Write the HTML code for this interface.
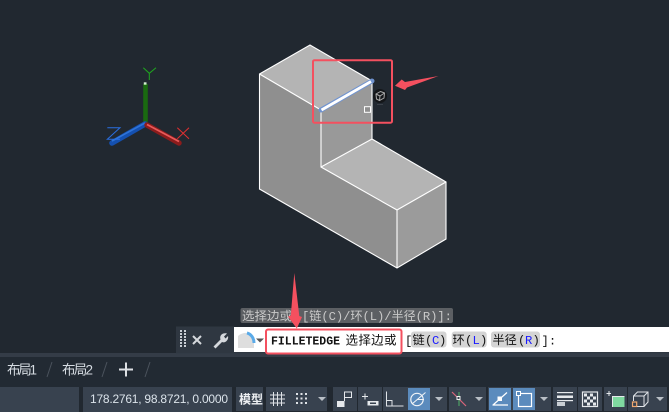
<!DOCTYPE html>
<html><head><meta charset="utf-8">
<style>
html,body{margin:0;padding:0;background:#212830;width:669px;height:412px;overflow:hidden}
svg{display:block}
text{font-family:"Liberation Mono","Noto Sans CJK SC",monospace}
.s{font-family:"Liberation Sans","Noto Sans CJK SC",sans-serif}
</style></head><body>
<svg width="669" height="412" viewBox="0 0 669 412" xmlns="http://www.w3.org/2000/svg">
<rect width="669" height="412" fill="#212830"/>

<!-- solid -->
<g stroke="none">
<polygon points="259.5,74 310,45 372,81 321,110" fill="#b4b4b4"/>
<polygon points="259.5,74 321,110 321,167 397,210 397,268 259.5,189" fill="#8f8f8f"/>
<polygon points="321,110 372,81 372,139 321,167" fill="#999999"/>
<polygon points="321,167 372,139 446,182 397,210" fill="#b4b4b4"/>
<polygon points="397,210 446,182 446,239 397,268" fill="#9b9b9b"/>
</g>
<g fill="none" stroke="#fff" stroke-width="1.1">
<path d="M259.5,74 L310,45 L372,81 L372,139 L446,182 L446,239 L397,268 L259.5,189 Z"/>
<path d="M259.5,74 L321,110 L321,167 L397,210 L397,268"/>
<path d="M321,167 L372,139"/>
<path d="M397,210 L446,182"/>
</g>
<path d="M321,110 L372,81" stroke="#6f93d0" stroke-width="5" stroke-linecap="round"/>
<path d="M321.5,110 L371,81.5" stroke="#fff" stroke-width="2.8"/>
<rect x="364.5" y="106.7" width="6" height="5.6" fill="#8f8f8f" stroke="#fff" stroke-width="1"/>

<!-- cursor cube -->
<circle cx="380" cy="96" r="7" fill="#141619"/>
<g fill="none" stroke="#a8a8a8" stroke-width="1">
<path d="M376,94 L380.5,91.5 L384.5,93 L384,98 L379.5,100.5 L376.5,99 Z"/>
<path d="M376,94 L380,96 L384.5,93 M380,96 L379.5,100.5"/>
</g>
<path d="M377,104.5 H383" stroke="#3a4048" stroke-width="1"/>

<!-- red box and arrows -->
<rect x="313" y="60.2" width="79" height="62.5" rx="1.5" fill="none" stroke="#f4505f" stroke-width="2"/>
<polygon points="395,85.7 401.7,79.5 405,82 438.5,76 407,87.5 405,90" fill="#f4505f"/>

<!-- UCS -->
<path d="M145.5,84 L145.5,124" stroke="#1a6a10" stroke-width="4.6"/>
<path d="M143.8,83.5 L146.5,83.5" stroke="#d5f0d0" stroke-width="2.4"/>
<path d="M145,124 L112,143" stroke="#1450b0" stroke-width="5.6" stroke-linecap="round"/>
<path d="M145,123 L112,141" stroke="#2f74d8" stroke-width="1.6"/>
<path d="M147,125 L179,143" stroke="#8c1c1c" stroke-width="5.4" stroke-linecap="round"/>
<path d="M147,124.5 L179,141.5" stroke="#e85a5a" stroke-width="1.7"/>
<g fill="none" stroke-width="1">
<path d="M143.3,67.7 L149.3,73.3 L156,67.7 M149.3,73.3 L149.3,80" stroke="#1fa51f"/>
<path d="M177.3,127.7 L189,138.7 M189,127.7 L177.3,138.7" stroke="#e03030"/>
<path d="M107.3,127.7 L120,127.7 L107.3,139.3 L120,139.3" stroke="#2a6fe0"/>
</g>

<!-- tooltip -->
<rect x="240.5" y="308" width="212.5" height="15" rx="2" fill="#5c5f63"/>
<g font-size="12.2" fill="#c9c9c9">
<text x="242" y="320" textLength="50" lengthAdjust="spacingAndGlyphs">选择边或</text>
<text x="302" y="320" textLength="150" lengthAdjust="spacing">[链(C)/环(L)/半径(R)]:</text>
</g>

<!-- command bar -->
<rect x="176" y="326.5" width="58" height="26.5" fill="#2f3741"/>
<rect x="234" y="327" width="435" height="25" fill="#ffffff"/>
<rect x="0" y="353" width="669" height="4" fill="#343c47"/>
<rect x="176" y="352" width="493" height="1.2" fill="#2f3741"/>
<g fill="#c9ced4">
<path d="M180,330 h2v2h-2z M184,330 h2v2h-2z M180,333 h2v2h-2z M184,333 h2v2h-2z M180,336 h2v2h-2z M184,336 h2v2h-2z M180,339 h2v2h-2z M184,339 h2v2h-2z M180,342 h2v2h-2z M184,342 h2v2h-2z M180,345 h2v2h-2z M184,345 h2v2h-2z"/>
</g>
<path d="M193,336 L201,344 M201,336 L193,344" stroke="#d5d8dc" stroke-width="2"/>
<path d="M213.5,346.5 L220.5,339.5 C219,335 223,332.5 227,333.5 L224,336.5 L225.5,338.5 L228,336 C229,340 225,343.5 222,342 L215.5,348.5 Z" fill="#d5d8dc"/>
<!-- fillet icon -->
<path d="M238,348 L238,336 C241,333 246,332.5 248,333 L254,340 L254,348 Z" fill="#dedede"/>
<path d="M247,333 C251,334 254,338 254,343" fill="none" stroke="#5aaae8" stroke-width="3"/>
<polygon points="256,338.5 264,338.5 260,342.5" fill="#555"/>

<!-- input -->
<rect x="266" y="329.5" width="135.5" height="24" rx="2" fill="#fff" stroke="#f4505f" stroke-width="2"/>
<text x="271" y="344.5" font-size="11.5" font-weight="bold" fill="#111" textLength="69">FILLETEDGE</text>
<text x="345.5" y="344.5" font-size="12.5" fill="#111" textLength="51">选择边或</text>

<!-- vertical arrow -->
<polygon points="294.3,273 299.3,316 302,317 296.8,328.5 288,316.5 290.8,315.5" fill="#f4505f"/>

<!-- options -->
<rect x="411" y="331.5" width="35.5" height="16" rx="3" fill="#d4d4d4"/>
<rect x="451.7" y="331.5" width="35" height="16" rx="3" fill="#d4d4d4"/>
<rect x="491" y="331.5" width="49" height="16" rx="3" fill="#d4d4d4"/>
<g font-size="12.2" fill="#111">
<text x="405" y="344.5">[</text>
<text x="412.5" y="344">链</text><text x="425" y="344">(</text><text x="432" y="344" fill="#1a1aff">C</text><text x="439" y="344">)</text>
<text x="452.5" y="344">环</text><text x="465" y="344">(</text><text x="472.5" y="344" fill="#1a1aff">L</text><text x="480" y="344">)</text>
<text x="492.5" y="344">半径</text><text x="518" y="344">(</text><text x="525" y="344" fill="#1a1aff">R</text><text x="532.5" y="344">)</text>
<text x="541.5" y="344.5">]:</text>
</g>

<!-- tabs -->
<rect x="0" y="357" width="669" height="30" fill="#222a33"/>
<text class="s" x="7" y="374.5" font-size="13.5" fill="#d5dbe1" textLength="30">布局1</text>
<text class="s" x="62" y="374.5" font-size="13.5" fill="#d5dbe1" textLength="31">布局2</text>
<path d="M47,377 L52,362 M102,377 L107,362 M145,377 L150,362" stroke="#4a525c" stroke-width="1"/>
<path d="M119,369.5 H133 M126,362.5 V376.5" stroke="#dde0e4" stroke-width="2"/>

<!-- status bar -->
<g fill="#38424f">
<rect x="0" y="387" width="79" height="25"/>
<rect x="83" y="387" width="149" height="25"/>
<rect x="236" y="387" width="27" height="24"/>
<rect x="266" y="387" width="61" height="24"/>
<rect x="333" y="387" width="24" height="24"/>
<rect x="358" y="387" width="24" height="24"/>
<rect x="383" y="387" width="64" height="24"/>
<rect x="449" y="387" width="37" height="24"/>
<rect x="488" y="387" width="63" height="24"/>
<rect x="553" y="387" width="24" height="24"/>
<rect x="578" y="387" width="24" height="24"/>
<rect x="604" y="387" width="23" height="24"/>
<rect x="628" y="387" width="39" height="24"/>
</g>
<text class="s" x="90" y="403" font-size="12" fill="#dbe3ea" textLength="138">178.2761, 98.8721, 0.0000</text>
<text class="s" x="239" y="403.5" font-size="12" font-weight="bold" fill="#eef0f3" textLength="24">模型</text>
<rect x="408" y="388" width="22" height="22" fill="#5b8bbd"/>
<rect x="489" y="388" width="22" height="22" fill="#5b8bbd"/>
<rect x="513" y="388" width="22" height="22" fill="#5b8bbd"/>

<!-- grid -->
<path d="M273.5,392 V406 M277.5,392 V406 M281.5,392 V406 M270,395 H285 M270,399 H285 M270,403 H285" stroke="#dfe3e7" stroke-width="1" fill="none"/>
<g fill="#dfe3e7"><rect x="296" y="393" width="2" height="2"/><rect x="300.5" y="393" width="2" height="2"/><rect x="305" y="393" width="2" height="2"/><rect x="296" y="397.5" width="2" height="2"/><rect x="300.5" y="397.5" width="2" height="2"/><rect x="305" y="397.5" width="2" height="2"/><rect x="296" y="402" width="2" height="2"/><rect x="300.5" y="402" width="2" height="2"/><rect x="305" y="402" width="2" height="2"/></g>
<g fill="#b9bfc6">
<polygon points="318,397 326,397 322,401"/>
<polygon points="435,397 443,397 439,401"/>
<polygon points="475,397 483,397 479,401"/>
<polygon points="540,397 548,397 544,401"/>
<polygon points="656,397 664,397 660,401"/>
</g>
<!-- snap -->
<rect x="337" y="401" width="7.5" height="6" fill="#e6e9ec"/>
<path d="M344.5,401 V392 H351.5 V397.5 H344.5" fill="none" stroke="#e6e9ec" stroke-width="1"/>
<!-- infer -->
<path d="M362,396.5 H368 M365,393.5 V399.5" stroke="#e6e9ec" stroke-width="1"/>
<rect x="367.5" y="401" width="11" height="4.5" fill="#e6e9ec"/>
<rect x="370" y="402.5" width="6" height="1.5" fill="#38424f"/>
<!-- ortho -->
<path d="M386.5,391.5 V406 H403.5 M386.5,400.5 H392 V406" fill="none" stroke="#dfe3e7" stroke-width="1"/>
<!-- polar -->
<circle cx="417" cy="399.5" r="6.2" fill="none" stroke="#f2f5f8" stroke-width="1.2"/>
<path d="M412,404 L425.5,392.5 M417,399.5 H424" stroke="#f2f5f8" stroke-width="1"/>
<!-- otrack -->
<path d="M452,392 L466,406" stroke="#d9657a" stroke-width="1.2"/>
<path d="M459,392 V406" stroke="#4fb36a" stroke-width="1"/>
<rect x="457" y="396.5" width="3" height="3" fill="#38424f" stroke="#f0f0f0" stroke-width="1"/>
<!-- dynamic ucs -->
<path d="M492.5,405 H508 M493,405 L507,392.5" fill="none" stroke="#fff" stroke-width="1.2"/>
<rect x="497.5" y="396.5" width="4.5" height="4.5" fill="#fff"/>
<!-- sel -->
<rect x="518.5" y="393.5" width="13" height="13" fill="none" stroke="#fff" stroke-width="1.2"/>
<rect x="516.5" y="391.5" width="4" height="4" fill="#5b8bbd" stroke="#fff" stroke-width="1"/>
<!-- lineweight -->
<rect x="557" y="392" width="16" height="1.2" fill="#e6e9ec"/>
<rect x="557" y="395.5" width="16" height="2.5" fill="#e6e9ec"/>
<rect x="557" y="400" width="16" height="1.2" fill="#e6e9ec"/>
<rect x="557" y="402" width="8" height="4" fill="#c9ced3"/>
<!-- transparency -->
<rect x="582.5" y="392" width="15" height="14.5" fill="#38424f" stroke="#e6e9ec" stroke-width="1.2"/>
<g fill="#e6e9ec"><rect x="584" y="393.5" width="3" height="3"/><rect x="590" y="393.5" width="3" height="3"/><rect x="587" y="396.5" width="3" height="3"/><rect x="593" y="396.5" width="3" height="3"/><rect x="584" y="399.5" width="3" height="3"/><rect x="590" y="399.5" width="3" height="3"/><rect x="587" y="402.5" width="3" height="3"/><rect x="593" y="402.5" width="3" height="3"/></g>
<!-- selection cycling -->
<path d="M606.5,393.5 H611 M609,391 V396" stroke="#e6e9ec" stroke-width="1"/>
<rect x="613" y="397" width="11.5" height="10" fill="#7fd9a0"/>
<path d="M612.5,407 V396.5 H624.5" fill="none" stroke="#e6e9ec" stroke-width="1"/>
<!-- 3d osnap -->
<path d="M633.5,401 V396 L637.5,392 H648 V402 L644,406.5 H637 M633.5,396 H644 V406.5 M644,396 L648,392" fill="none" stroke="#dfe3e7" stroke-width="1"/>
<rect x="632.5" y="402" width="4.2" height="4.5" fill="none" stroke="#f0a870" stroke-width="1.2"/>
</svg>
</body></html>
